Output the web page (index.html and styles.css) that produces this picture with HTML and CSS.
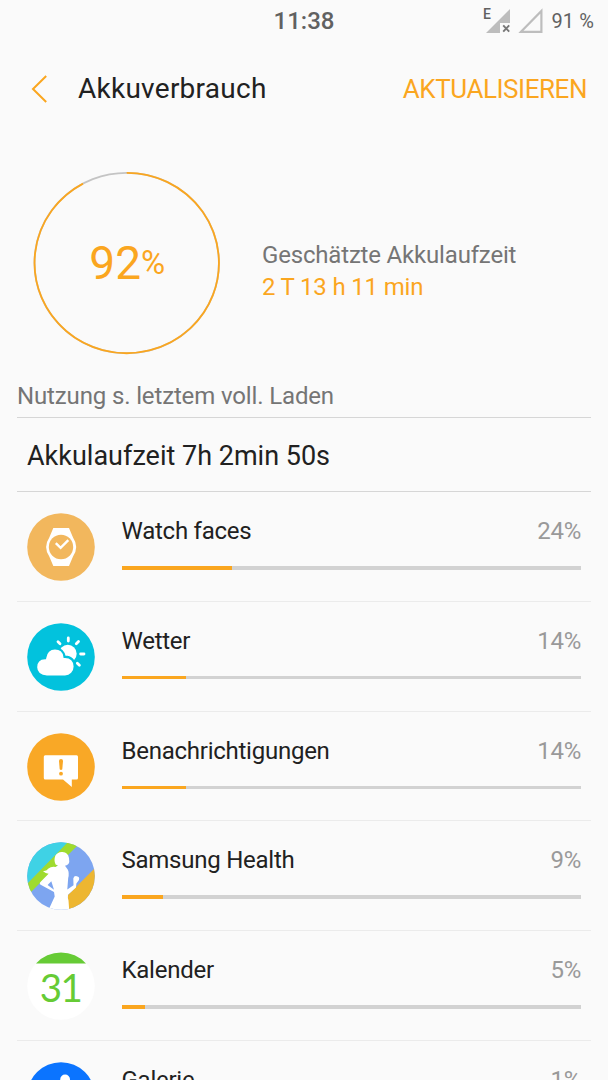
FILE: index.html
```html
<!DOCTYPE html>
<html lang="de">
<head>
<meta charset="utf-8">
<title>Akkuverbrauch</title>
<link rel="stylesheet" href="styles.css">
</head>
<body>
<div class="screen">
  <div class="status">
    <span class="clock">11:38</span>
    <div class="tray">
      <svg class="signals" width="62" height="28" viewBox="0 0 62 28">
        <path fill="#bdbdbd" d="M5 26 29 2V16H19V26Z"/>
        <path fill="none" stroke="#bdbdbd" stroke-width="2.2" d="M40 24.8 60.4 4V24.8Z"/>
        <path stroke="#777" stroke-width="1.9" d="M22.2 18.3 28.2 24.7M28.2 18.3 22.2 24.7"/>
        <text class="edge" x="2" y="12">E</text>
      </svg>
      <span class="level">91 %</span>
    </div>
  </div>
  <header class="header">
    <svg class="back" width="20" height="32" viewBox="0 0 20 32"><path fill="none" stroke="#faa61f" stroke-width="2" d="M16.2 3 3 16 16.2 29"/></svg>
    <h1 class="title">Akkuverbrauch</h1>
    <span class="refresh">AKTUALISIEREN</span>
  </header>
  <section class="summary">
    <div class="gauge">
      <svg class="ring" width="188" height="184" viewBox="0 0 188 184">
        <ellipse class="track" cx="93.7" cy="92" rx="92.2" ry="90.2"/>
        <path class="arc" d="M93.7 1.8A92.2 90.2 0 1 1 50 12.6"/>
      </svg>
      <div class="charge">92<span class="unit">%</span></div>
    </div>
    <div class="estimate">
      <div class="label">Geschätzte Akkulaufzeit</div>
      <div class="remaining">2 T 13 h 11 min</div>
    </div>
  </section>
  <h2 class="section">Nutzung s. letztem voll. Laden</h2>
  <div class="runtime"><span>Akkulaufzeit 7h 2min 50s</span></div>
  <div class="list">
    <div class="row">
      <svg class="icon" viewBox="0 0 68 68"><circle cx="34" cy="34" r="33.8" fill="#f2b75d"/><path fill="#fff" d="M26.3 15H42L46 24.5Q52.4 34 46 43.5L42 53H26.3L22.3 43.5Q15.9 34 22.3 24.5Z"/><circle cx="34" cy="34" r="12.2" fill="#f2b75d"/><path fill="none" stroke="#fff" stroke-width="2.4" d="M28.8 30.2 33.6 34.8 41.3 27.2"/></svg>
      <div class="usage"><div class="line"><span>Watch faces</span><span class="pct">24%</span></div><div class="bar"><div class="fill" style="width:24.1%"></div></div></div>
    </div>
    <div class="row">
      <svg class="icon" viewBox="0 0 68 68"><circle cx="34" cy="34" r="33.8" fill="#02c2dd"/><circle cx="40.8" cy="30.7" r="8.9" fill="#fff"/><g stroke="#fff" stroke-width="2.8" stroke-linecap="round"><path d="M41.3 14.9V18.1M51.5 18.6 49.3 20.8M31 18.8 33 20.7M53.6 31H57M50.3 40.2 52.4 42.3"/></g><path fill="#fff" stroke="#02c2dd" stroke-width="2.4" d="M20 53.6C13 53.6 9 49.4 9 44.2 9 38.4 13 35.2 18 35 19 28.8 23 25.4 28 25.4 34 25.4 37 29.7 37.6 33.7 44 33.5 47.8 37.7 47.8 43.4 47.8 49.2 43.6 53.6 38 53.6Z"/></svg>
      <div class="usage"><div class="line"><span>Wetter</span><span class="pct">14%</span></div><div class="bar"><div class="fill" style="width:14.1%"></div></div></div>
    </div>
    <div class="row">
      <svg class="icon" viewBox="0 0 68 68"><circle cx="34" cy="34" r="33.8" fill="#f9a826"/><path fill="#fff" d="M18.2 22.2H49.6Q51 22.2 51 23.7V44.9Q51 46.4 49.6 46.4H44.8V54L36 46.4H18.2Q16.8 46.4 16.8 44.9V23.7Q16.8 22.2 18.2 22.2Z"/><path fill="#f9a826" d="M32 28Q32 26 34 26T36 28L35.3 36.3Q34 37.7 32.7 36.3Z"/><circle cx="34" cy="40.7" r="1.9" fill="#f9a826"/></svg>
      <div class="usage"><div class="line"><span>Benachrichtigungen</span><span class="pct">14%</span></div><div class="bar"><div class="fill" style="width:14.1%"></div></div></div>
    </div>
    <div class="row">
      <svg class="icon" viewBox="0 0 68 68"><defs><clipPath id="disc"><circle cx="34" cy="34" r="33.8"/></clipPath></defs><g clip-path="url(#disc)"><path fill="#7da5f0" d="M0 0H68V68H0Z"/><path fill="#3fd2e5" d="M0 0H42L0 42Z"/><path fill="#9fdb2f" d="M1 41 41 0H50.5V3.5L4 50 0 49Z"/><path fill="#edb631" d="M68 26V68H41V53Z"/><path fill="#fff" d="M21.5 68 27.7 54.4 27 50 13.2 42.5Q12 41 13.7 39.7L21.6 31.7Q18.7 31.7 16 29.3 19.8 28.8 21.5 26.4 24 24.4 28.5 25L31 23.4 28.6 22.5Q26.5 18.5 28.4 13.5 31 9.5 35.6 10 41 10.3 42 16L42.3 20Q41.5 23.4 38 23.7 39.2 25.5 40.7 27.5 42.5 31 41.2 36L40.3 47.4 46.5 43.2 46.3 36.5Q47 33.7 49.7 34.2 53.2 34.8 51.8 38.2L49.4 41.5 49 45.6 41 52.7Q40.5 55.6 41.5 58.6L42.2 68Z"/><path fill="#7da5f0" d="M24.3 39.3 27 47.7 20.6 43Z"/></g></svg>
      <div class="usage"><div class="line"><span>Samsung Health</span><span class="pct">9%</span></div><div class="bar"><div class="fill" style="width:9.1%"></div></div></div>
    </div>
    <div class="row">
      <svg class="icon" viewBox="0 0 68 68"><circle cx="34" cy="34" r="33.8" fill="#fff"/><path fill="#66cb35" d="M9 11.5A33.8 33.8 0 0 1 59 11.5Z"/><text class="day" x="33.5" y="49.5" text-anchor="middle">31</text></svg>
      <div class="usage"><div class="line"><span>Kalender</span><span class="pct">5%</span></div><div class="bar"><div class="fill" style="width:5.1%"></div></div></div>
    </div>
    <div class="row">
      <svg class="icon" viewBox="0 0 68 68"><circle cx="34" cy="34" r="33.8" fill="#0b74ff"/><path fill="#fff" d="M33.2 30V17.5A4.9 4.9 0 0 1 43 17.5V30Z"/></svg>
      <div class="usage"><div class="line"><span>Galerie</span><span class="pct">1%</span></div><div class="bar"><div class="fill" style="width:1%"></div></div></div>
    </div>
  </div>
</div>
</body>
</html>
```

FILE: styles.css
```css
body { margin: 0; background: #fafafa; font-family: Roboto, sans-serif; color: #212121; }
.screen { width: 608px; height: 1080px; overflow: hidden; }
.status { display: grid; grid-template-columns: 1fr auto 1fr; align-items: center; height: 42px; color: #616161; }
.clock { grid-column: 2; font-size: 24px; font-weight: 500; }
.tray { display: flex; justify-content: flex-end; align-items: center; gap: 9px; padding-right: 14px; }
.signals { display: block; }
.edge { font-size: 14px; font-weight: 500; fill: #616161; }
.level { font-size: 20px; letter-spacing: 0.1px; }
.header { display: flex; align-items: center; height: 93px; padding: 0 21px 0 30px; }
.back { display: block; }
.title { margin: 0 auto 0 28px; font-size: 28px; letter-spacing: 0.26px; font-weight: 400; }
.refresh { font-size: 26px; letter-spacing: -0.45px; color: #faa61f; }
.summary { display: flex; align-items: center; height: 190px; padding: 33px 0 0 33px; }
.gauge { display: grid; place-items: center; width: 188px; }
.ring, .charge { grid-area: 1 / 1; }
.ring { display: block; fill: none; stroke-width: 1.8; }
.track { stroke: #c4c4c4; }
.arc { stroke: #faa61f; }
.charge { display: flex; align-items: center; font-size: 46px; line-height: 54px; color: #faa61f; }
.unit { font-size: 33px; line-height: 54px; letter-spacing: -0.5px; }
.estimate { margin: 15px 0 0 41px; font-size: 24px; line-height: 32px; letter-spacing: -0.18px; }
.label { color: #757575; }
.remaining { color: #faa61f; }
.section { margin: 0 17px; padding-top: 22px; height: 37px; font-size: 24px; line-height: 32px; font-weight: 400; letter-spacing: -0.14px; color: #757575; border-bottom: 1px solid #d6d6d6; }
.runtime { display: flex; align-items: center; box-sizing: border-box; height: 74px; margin: 0 17px; padding: 3px 10px 0; font-size: 27px; border-bottom: 1px solid #d6d6d6; }
.list { margin: 0 17px; }
.row { display: flex; box-sizing: border-box; height: 109.75px; padding: 21px 10px 0; border-bottom: 1px solid #ebebeb; }
.icon { display: block; flex: none; width: 68px; height: 68px; }
.usage { flex: 1; margin-left: 26.5px; }
.line { display: flex; justify-content: space-between; height: 53px; font-size: 24px; line-height: 37px; letter-spacing: -0.25px; }
.pct { color: #999; }
.bar { height: 3.5px; background: #d2d2d2; }
.fill { height: 100%; background: #faa61f; }
.day { font-family: Lato, sans-serif; font-size: 38.5px; letter-spacing: -1.5px; fill: #66cb35; }
```
